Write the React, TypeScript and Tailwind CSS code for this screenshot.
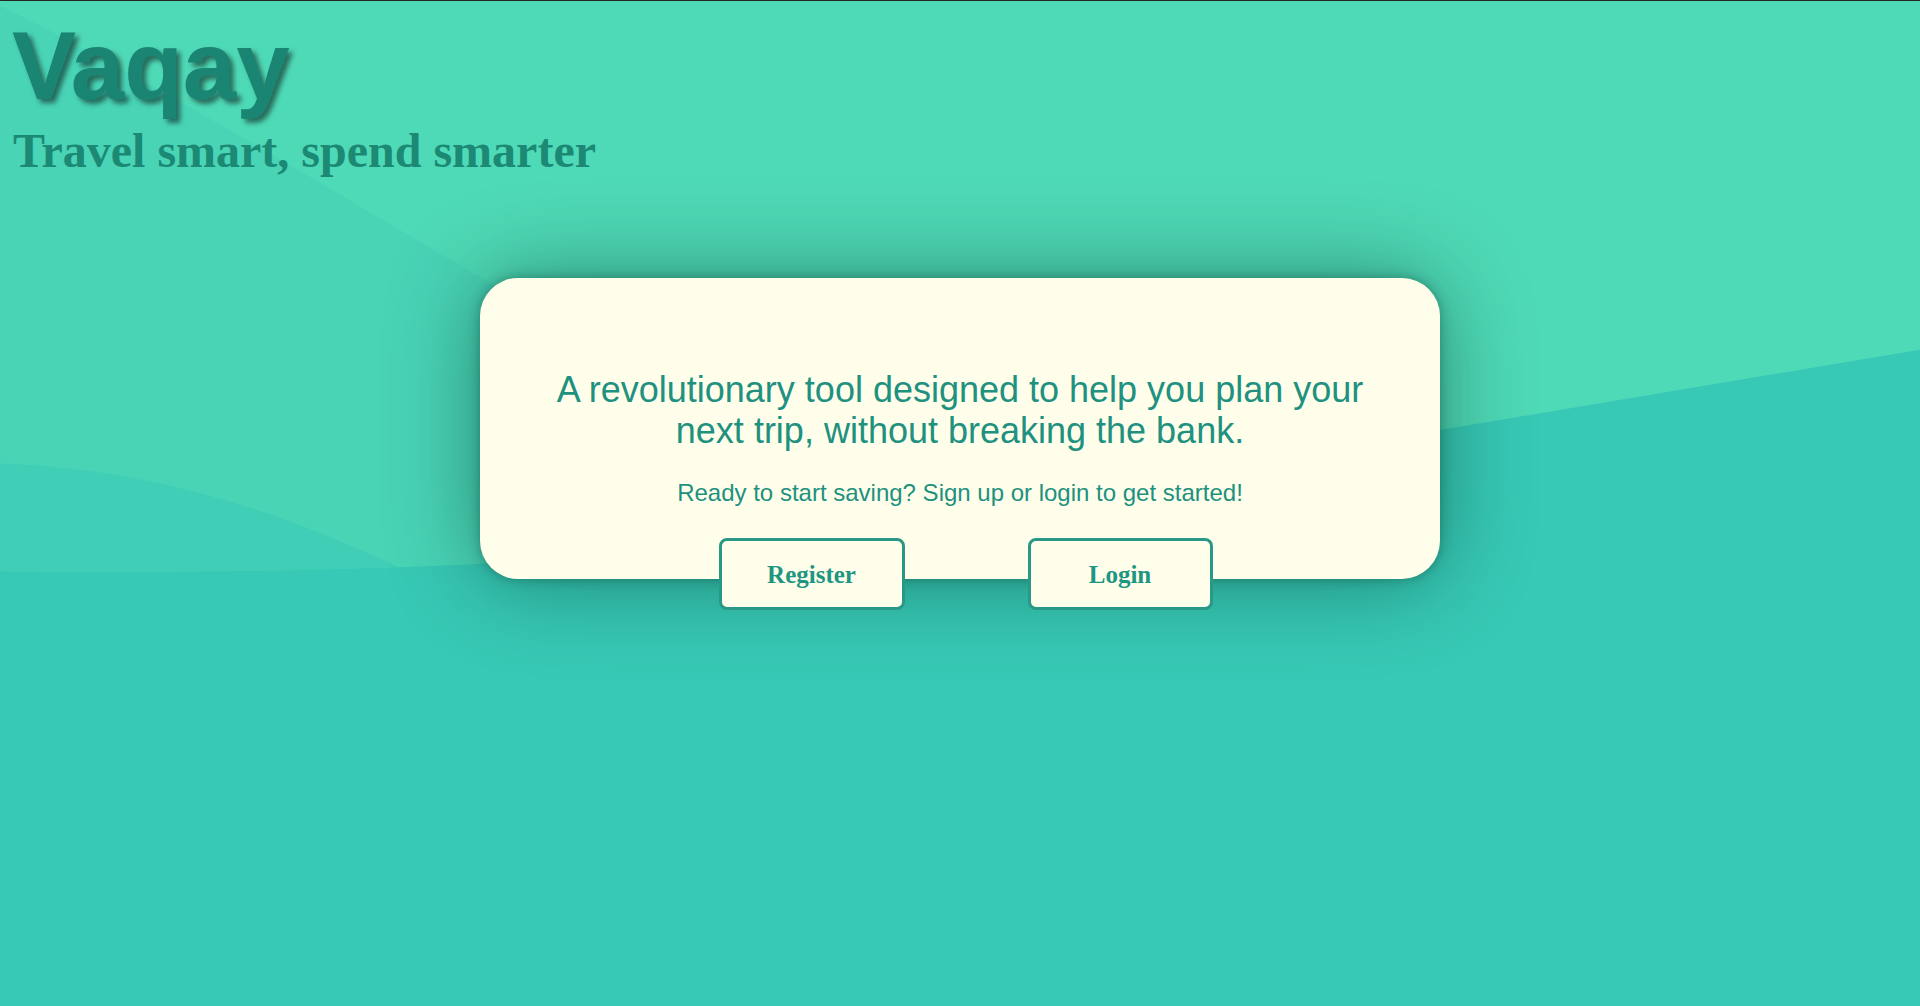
import React from 'react';

const Backdrop: React.FC = () => (
  <svg
    className="absolute inset-0 h-full w-full"
    viewBox="0 0 1920 1006"
    preserveAspectRatio="none"
    aria-hidden="true"
  >
    <rect width="1920" height="1006" fill="#4fdab7" />
    <path d="M0 5 C120 62 300 170 520 300 L1150 640 L0 640 Z" fill="#49d4b6" />
    <path d="M0 463 C150 468 280 510 405 570 L0 600 Z" fill="#40ceb6" />
    <path d="M0 571 C250 574 500 568 750 545 L1920 349 L1920 1006 L0 1006 Z" fill="#37c9b5" />
  </svg>
);

const App: React.FC = () => {
  return (
    <div className="relative min-h-screen w-full overflow-hidden border-t border-[#262626]">
      <Backdrop />

      <div className="relative">
        <header className="pl-3 pt-[10px]">
          <h1 className="font-['Liberation_Sans',Arial,sans-serif] text-[96px] font-bold leading-[110px] text-[#1a8572] [text-shadow:4px_4px_5px_rgba(0,0,0,0.5)]">
            Vaqay
          </h1>
          <h2 className="mt-[2px] pl-[1px] font-['Liberation_Serif','Times_New_Roman',serif] text-[48px] font-bold leading-[55px] text-[#1c8975]">
            Travel smart, spend smarter
          </h2>
        </header>

        <main className="mt-[100px] flex justify-center">
          <div className="flex h-[301px] w-[960px] flex-col items-center rounded-[38px] bg-[#fffeeb] pt-[91px] font-['Liberation_Sans',Arial,sans-serif] shadow-[0_0_12px_rgba(0,40,30,0.35),0_0_90px_rgba(0,40,30,0.45)]">
            <p className="w-[880px] text-center text-[36px] leading-[41.4px] text-[#20917f]">
              A revolutionary tool designed to help you plan your next trip, without breaking the bank.
            </p>
            <p className="mt-[27px] text-center text-[24px] leading-[27.6px] text-[#20917f]">
              Ready to start saving? Sign up or login to get started!
            </p>
            <div className="mt-[32px] flex gap-[123px] pl-[11px]">
              <button
                type="button"
                className="h-[72px] w-[186px] rounded-lg border-[3px] border-[#2a9886] bg-[#fffeeb] font-['Liberation_Serif','Times_New_Roman',serif] text-[25px] font-bold text-[#1f9682]"
              >
                Register
              </button>
              <button
                type="button"
                className="h-[72px] w-[185px] rounded-lg border-[3px] border-[#2a9886] bg-[#fffeeb] font-['Liberation_Serif','Times_New_Roman',serif] text-[25px] font-bold text-[#1f9682]"
              >
                Login
              </button>
            </div>
          </div>
        </main>
      </div>
    </div>
  );
};

export default App;
